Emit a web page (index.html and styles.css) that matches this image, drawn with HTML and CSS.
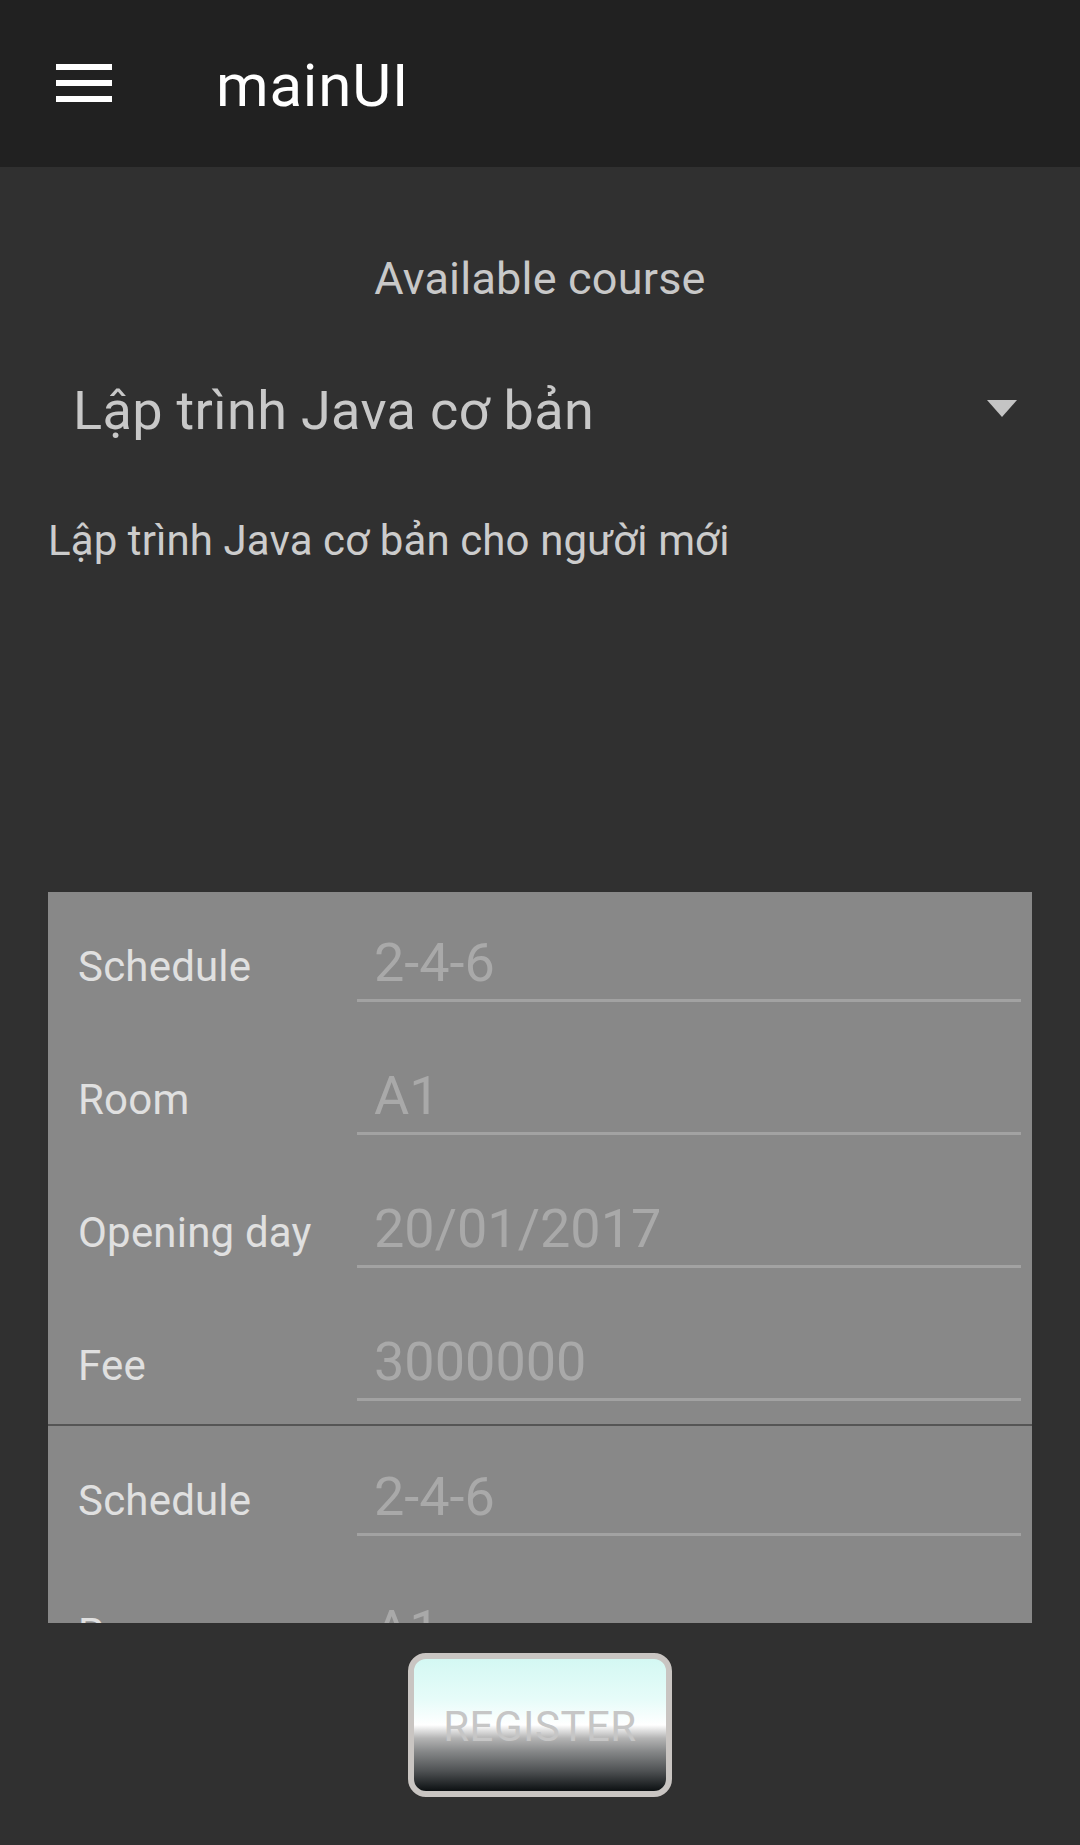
FILE: index.html
```html
<!DOCTYPE html>
<html>
<head>
<meta charset="utf-8">
<link rel="stylesheet" href="styles.css">
</head>
<body>
<header class="toolbar">
  <svg class="menu-icon" width="56" height="38" viewBox="0 0 56 38">
    <rect x="0" y="0" width="56" height="6" fill="#ffffff"/>
    <rect x="0" y="16" width="56" height="6" fill="#ffffff"/>
    <rect x="0" y="32" width="56" height="6" fill="#ffffff"/>
  </svg>
  <div class="title">mainUI</div>
</header>
<main class="content">
  <div class="heading">Available course</div>
  <div class="spinner">
    <span class="spinner-text">Lập trình Java cơ bản</span>
    <svg class="spinner-arrow" width="30" height="17" viewBox="0 0 30 17"><polygon points="0,0 30,0 15,17" fill="#c4c4c4"/></svg>
  </div>
  <div class="description">Lập trình Java cơ bản cho người mới</div>
  <div class="card">
    <div class="item">
      <div class="row"><div class="label">Schedule</div><div class="field">2-4-6</div></div>
      <div class="row"><div class="label">Room</div><div class="field">A1</div></div>
      <div class="row"><div class="label">Opening day</div><div class="field">20/01/2017</div></div>
      <div class="row"><div class="label">Fee</div><div class="field">3000000</div></div>
    </div>
    <div class="item">
      <div class="row"><div class="label">Schedule</div><div class="field">2-4-6</div></div>
      <div class="row"><div class="label">Room</div><div class="field">A1</div></div>
    </div>
  </div>
  <div class="actions">
    <button class="register">REGISTER</button>
  </div>
</main>
</body>
</html>
```
FILE: styles.css
```css
html, body {
  margin: 0;
  padding: 0;
}
body {
  width: 1080px;
  height: 1845px;
  background: #303030;
  font-family: Roboto, "Noto Sans", sans-serif;
  overflow: hidden;
}
.toolbar {
  height: 167px;
  background: #212121;
  display: flex;
  align-items: flex-start;
  box-sizing: border-box;
}
.menu-icon {
  display: block;
  margin-top: 64px;
  margin-left: 56px;
}
.title {
  margin-top: 56px;
  margin-left: 104px;
  font-size: 60px;
  line-height: 60px;
  color: #ffffff;
  letter-spacing: 0.8px;
}
.content {
  display: flex;
  flex-direction: column;
}
.heading {
  margin-top: 89px;
  font-size: 45px;
  line-height: 45px;
  color: #c8c8c8;
  text-align: center;
  letter-spacing: 0.2px;
}
.spinner {
  margin-top: 83px;
  display: flex;
  align-items: flex-start;
  padding-left: 73px;
  padding-right: 63px;
  height: 54px;
}
.spinner-text {
  flex: 1;
  font-size: 54px;
  line-height: 54px;
  color: #c8c8c8;
  letter-spacing: 0.35px;
}
.spinner-arrow {
  display: block;
  margin-top: 16px;
}
.description {
  margin-top: 82px;
  padding-left: 48px;
  font-size: 42px;
  line-height: 42px;
  color: #cccccc;
  letter-spacing: 0.1px;
}
.card {
  margin-top: 330px;
  margin-left: 48px;
  width: 984px;
  height: 731px;
  background: #888888;
  overflow: hidden;
}
.item + .item {
  border-top: 2px solid #555555;
}
.row {
  height: 133px;
  display: grid;
  grid-template-columns: 279px 664px;
  padding-left: 30px;
  align-items: start;
}
.label {
  padding-top: 54px;
  font-size: 42px;
  line-height: 42px;
  color: #e0e0e0;
  white-space: nowrap;
  letter-spacing: 0.2px;
}
.field {
  padding-top: 44px;
  padding-bottom: 9px;
  padding-left: 17px;
  font-size: 54px;
  line-height: 54px;
  color: #a9a9a9;
  border-bottom: 3px solid #a2a2a2;
}
.actions {
  display: flex;
  justify-content: center;
  margin-top: 30px;
}
.register {
  width: 264px;
  height: 144px;
  box-sizing: border-box;
  border: 6px solid #c9c5c2;
  border-radius: 18px;
  background: linear-gradient(to bottom, #d4f8f3 0%, #e6fcf9 30%, #ffffff 50%, #b4b4b4 60%, #868889 70%, #4e5153 85%, #0c1012 100%);
  font-family: Roboto, "Noto Sans", sans-serif;
  font-size: 42px;
  line-height: 42px;
  color: #c6c6c6;
  padding: 4px 0 0 0;
  letter-spacing: 0.5px;
}
```
